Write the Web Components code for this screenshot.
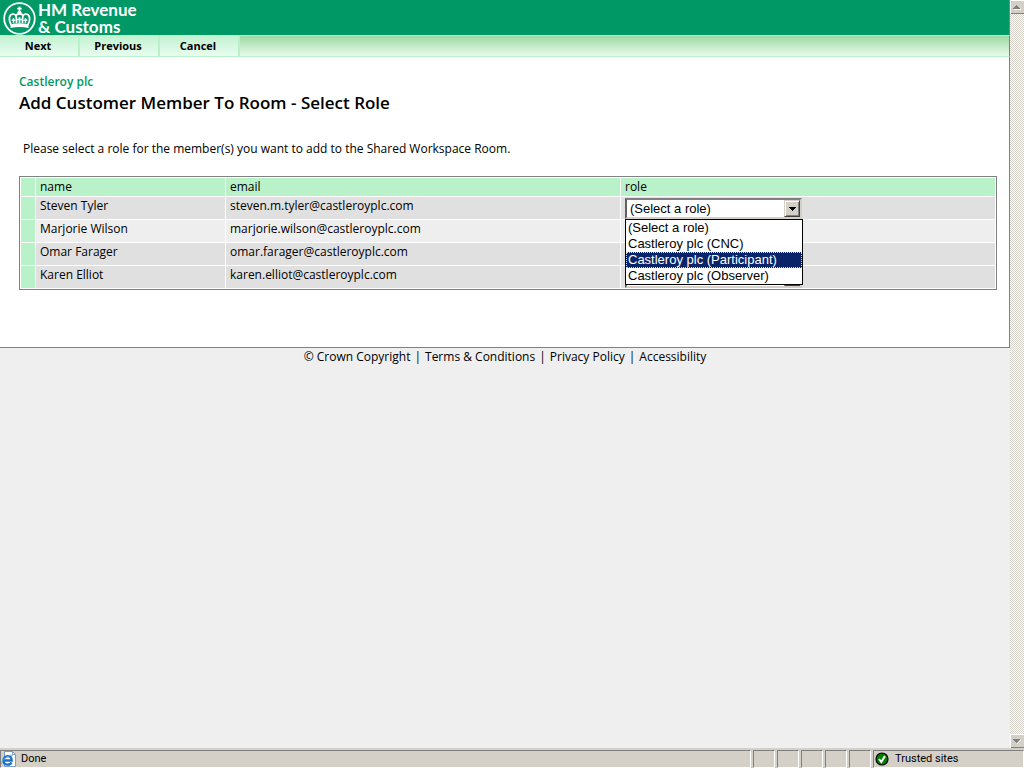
<!DOCTYPE html>
<html lang="en">
<head>
<meta charset="utf-8">
<title>Add Customer Member To Room</title>
<style>
  html, body { height: 100%; }
  body { margin: 0; background: #efefef; color: #000; font: 12px/16px "Open Sans", sans-serif; }
</style>
</head>
<body>
<browser-window>
  <page-header></page-header>
  <page-nav></page-nav>
  <page-panel>
    <page-title group="Castleroy plc">Add Customer Member To Room - Select Role</page-title>
    <member-table></member-table>
  </page-panel>
  <page-footer></page-footer>
  <scroll-track slot="scroll"></scroll-track>
  <status-bar slot="status"></status-bar>
</browser-window>
<script>
const define = (name, html, setup) => {
  const template = document.createElement('template');
  template.innerHTML = html;
  customElements.define(name, class extends HTMLElement {
    constructor() {
      super();
      this.attachShadow({ mode: 'open' }).append(template.content.cloneNode(true));
    }
    connectedCallback() { if (setup) setup(this, this.shadowRoot); }
  });
};

define('browser-window', `
<style>
  :host { display: grid; grid-template: minmax(0, 1fr) auto / minmax(0, 1fr) 14px; height: 100vh; overflow: hidden; }
  main { overflow: hidden; background: #efefef; }
  ::slotted([slot=status]) { grid-column: 1 / -1; }
</style>
<main><slot></slot></main>
<slot name="scroll"></slot>
<slot name="status"></slot>`);

define('page-header', `
<style>
  :host { display: flex; align-items: center; gap: 2px; height: 35px; padding-left: 3px; background: #009966; color: #fff; border-right: 1px solid #808080; box-sizing: border-box; }
  svg { width: 33px; height: 34px; }
  p { margin: 0; padding-top: 1px; font: 700 17px/17px Lato, sans-serif; }
</style>
<svg viewBox="0 0 33 34" fill="none" stroke="#fff" aria-hidden="true">
  <circle cx="16.500" cy="17.500" r="15.300" stroke-width="1.800"/>
  <g fill="#fff" stroke="none">
    <path d="M7.500 23.500Q16.500 21 25.500 23.500V27Q16.500 25 7.500 27Z"/>
    <path d="M15.700 5.500h1.600v1.300h1.400v1.600h-1.400v1.500h-1.600V8.400h-1.400V6.800h1.400z"/>
    <circle cx="16.500" cy="11.300" r="1.900"/>
    <path d="M15.700 16h1.600v1.700h1.600v1.600h-1.600V22h-1.600v-2.700h-1.600v-1.600h1.600z"/>
    <path d="M9.800 17h1.400v1.500h1.300v1.400h-1.300v2.300H9.800v-2.300H8.700v-1.400h1.100zM21.800 17h1.400v1.500h1.100v1.400h-1.100v2.300h-1.400v-2.300h-1.300v-1.400h1.300z"/>
  </g>
  <path stroke-width="1.700" d="M8.200 24C5 18 6.200 13 10.200 13c3 0 3.500 3 3.300 9M24.800 24c3.200-6 2-11-2-11-3 0-3.500 3-3.300 9M12.500 14.500q4-3.500 8 0"/>
</svg>
<p>HM Revenue<br>&amp; Customs</p>`);

define('page-nav', `
<style>
  :host { display: block; border-right: 1px solid #808080; background: linear-gradient(#9fd8a5, #e6fbea); border-top: 1px solid #b9f1c9; border-bottom: 1px solid #b9f1c9; }
  nav { display: flex; height: 20px; }
  button { width: 80px; border: 0; border-right: 2px solid #b9f1c9; padding: 0 2px 0 0; background: linear-gradient(#c2f2d0, #e9fdf1); color: #000; font: 700 11px/18px "Open Sans", sans-serif; }
</style>
<nav><button>Next</button><button>Previous</button><button>Cancel</button></nav>`);

define('page-panel', `
<style>
  :host { display: block; padding: 17px 12px 57px 19px; background: #fff; border: solid #808080; border-width: 0 1px 1px 0; }
</style>
<slot></slot>`);

define('page-title', `
<style>
  :host { display: block; }
  p { margin: 0; color: #009966; font: 600 12px/16px "Open Sans", sans-serif; }
  h1 { margin: 0 0 25px; font: 600 17px/26px "Open Sans", sans-serif; }
</style>
<p></p><h1><slot></slot></h1>`, (host, root) => {
  root.querySelector('p').textContent = host.getAttribute('group');
});

define('role-list', `
<style>
  :host { display: block; box-sizing: border-box; width: 178px; border: 1px solid #000; background: #fff; font: 13px/16px "Liberation Sans", Arial, sans-serif; }
  ul { margin: 0; padding: 0; list-style: none; }
  li { padding: 0 2px; white-space: nowrap; }
  li[aria-selected=true] { background: #0a246a; color: #fff; outline: 1px dotted #f5db95; outline-offset: -1px; }
</style>
<ul role="listbox" aria-label="Roles">
  <li role="option">(Select a role)</li>
  <li role="option">Castleroy plc (CNC)</li>
  <li role="option" aria-selected="true">Castleroy plc (Participant)</li>
  <li role="option">Castleroy plc (Observer)</li>
</ul>`);

define('role-select', `
<style>
  :host { display: block; position: relative; width: 177px; }
  select { appearance: none; display: block; box-sizing: border-box; width: 100%; height: 21px; margin: 0; padding: 0 20px 0 3px; border: 2px solid; border-color: #808080 #d4d0c8 #d4d0c8 #606060; border-radius: 0; background: #fff; color: #000; font: 13px/17px "Liberation Sans", Arial, sans-serif; outline: 0; }
  i { position: absolute; top: 2px; right: 2px; bottom: 2px; width: 16px; box-sizing: border-box; display: grid; place-items: center; background: #d4d0c8; border: 1px solid; border-color: #d4d0c8 #404040 #404040 #d4d0c8; box-shadow: inset 1px 1px #fff, inset -1px -1px #808080; pointer-events: none; }
  svg { width: 7px; height: 4px; }
  role-list { position: absolute; top: 100%; left: 0; z-index: 1; }
  :host(:not([open])) role-list { display: none; }
</style>
<select aria-label="Role"><option>(Select a role)</option></select>
<i><svg viewBox="0 0 7 4" shape-rendering="crispEdges"><path d="M0 0h7v1H6v1H5v1H4v1H3V3H2V2H1V1H0z"/></svg></i>
<role-list></role-list>`);

define('member-table', `
<style>
  :host { display: block; }
  p { margin: 0 0 19px 4px; }
  table { width: 100%; table-layout: fixed; border: 1px solid #808080; border-spacing: 1px; background: #fff; }
  th, td { height: 18px; padding: 0 0 0 4px; font-weight: 400; line-height: 18px; text-align: left; vertical-align: top; }
  th, td:first-child { background: #b9f1c9; }
  td { background: #e0e0e0; height: 22px; }
  tbody tr:nth-child(2) td:not(:first-child) { background: #eee; }
  td:last-child { padding-top: 1px; height: 21px; }
  .mark { width: 10px; } .name { width: 185px; } .email { width: 390px; }
</style>
<p>Please select a role for the member(s) you want to add to the Shared Workspace Room.</p>
<table>
  <thead><tr><th class="mark"></th><th class="name">name</th><th class="email">email</th><th>role</th></tr></thead>
  <tbody></tbody>
</table>`, (host, root) => {
  const members = [
    ['Steven Tyler', 'steven.m.tyler@castleroyplc.com'],
    ['Marjorie Wilson', 'marjorie.wilson@castleroyplc.com'],
    ['Omar Farager', 'omar.farager@castleroyplc.com'],
    ['Karen Elliot', 'karen.elliot@castleroyplc.com'],
  ];
  root.querySelector('tbody').innerHTML = members.map(([name, email], i) =>
    `<tr><td></td><td>${name}</td><td>${email}</td><td><role-select ${i ? '' : 'open'}></role-select></td></tr>`).join('');
});

define('page-footer', `
<style>
  :host { display: flex; justify-content: center; gap: 4px; padding: 1px 0; }
  a { color: inherit; text-decoration: none; }
</style>
<a href="#">© Crown Copyright</a><span>|</span><a href="#">Terms &amp; Conditions</a><span>|</span><a href="#">Privacy Policy</a><span>|</span><a href="#">Accessibility</a>`);

define('scroll-track', `
<style>
  :host { display: flex; flex-direction: column; justify-content: space-between; background: repeating-conic-gradient(#fff 0 25%, #d4d0c8 0 50%) 0 0 / 2px 2px; }
  button { display: grid; place-items: center; height: 14px; padding: 0; border: 0; background: #d4d0c8; box-shadow: inset 1px 1px #fff, inset 0 -1px #808080; }
  svg { width: 8px; height: 5px; }
</style>
<button aria-label="Scroll up"><svg viewBox="0 0 8 5" shape-rendering="crispEdges"><path fill="#fff" d="M1 4h7v1H1z"/><path fill="#808080" d="M3 0h1v1h1v1h1v1h1v1H0V3h1V2h1V1h1z"/></svg></button>
<button aria-label="Scroll down"><svg viewBox="0 0 8 5" shape-rendering="crispEdges"><path fill="#fff" d="M7 1h1v1H7v1H6v1H5v1H4V4z"/><path fill="#808080" d="M0 0h7v1H6v1H5v1H4v1H3V3H2V2H1V1H0z"/></svg></button>`);

define('status-bar', `
<style>
  :host { display: flex; gap: 2px; height: 20px; padding-top: 2px; box-sizing: border-box; background: #d4d0c8; font: 11px/16px Roboto, sans-serif; }
  div { box-sizing: border-box; width: 22px; border: 1px solid; border-color: #808080 #fff #fff #808080; display: flex; align-items: center; gap: 4px; }
  .text { flex: 1; }
  .zone { width: 151px; padding-left: 1px; gap: 4px; }
  svg { width: 16px; height: 16px; flex: none; }
</style>
<div class="text"><svg viewBox="0 0 16 16" aria-hidden="true"><path fill="#fff" stroke="#7c9ccc" d="M3.500.500h8l3 3v12h-11z"/><path fill="none" stroke="#7c9ccc" d="M11.500.500v3h3"/><path fill="none" stroke="#1c72c8" stroke-width="2.300" d="M2.500 9.500h8.200C10.500 3.500 2.500 4 2.500 9.500c0 5 6.500 5.200 8 2"/><path fill="none" stroke="#59a9e8" d="M1 13C-1 11 6 4 12 4"/></svg><span>Done</span></div>
<div></div><div></div><div></div><div></div><div></div>
<div class="zone"><svg viewBox="0 0 16 16" aria-hidden="true"><circle cx="7" cy="8" r="6" fill="#008000" stroke="#000" stroke-width="1.200"/><path fill="none" stroke="#fff" stroke-width="2" d="M4 8l2.300 3L10 5"/></svg><span>Trusted sites</span></div>`);
</script>
</body>
</html>
